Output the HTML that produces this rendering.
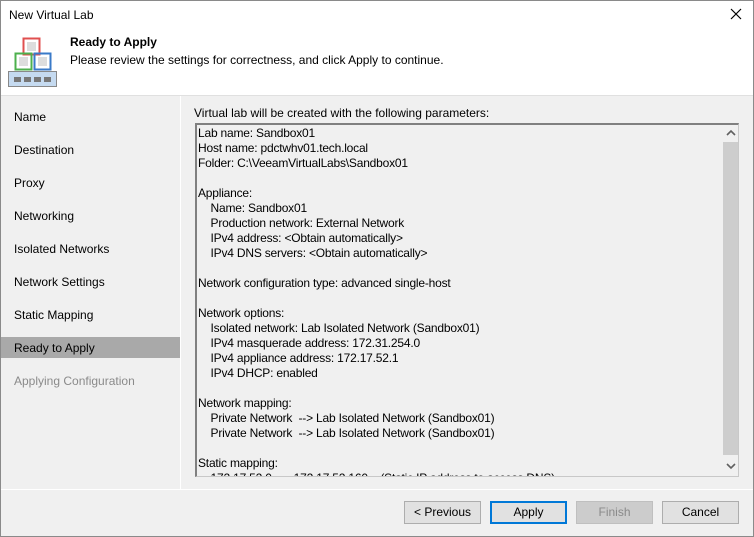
<!DOCTYPE html><html><head><style>
body{margin:0;width:754px;height:537px;overflow:hidden;font-family:"Liberation Sans",sans-serif;font-size:12px;color:#000;position:relative;background:#f0f0f0}
.abs{position:absolute}
.btn{position:absolute;top:501px;width:75px;height:21px;border:1px solid #adadad;background:#e1e1e1;text-align:center;line-height:21px;font-size:12px}
.nav{position:absolute;left:14px;font-size:12px}
pre{margin:0;font-family:"Liberation Sans",sans-serif;font-size:12px;line-height:15px;letter-spacing:-0.2px}
</style></head><body>
<div class="abs" style="left:0;top:0;width:752px;height:535px;border:1px solid #8a8a8a"></div>
<div class="abs" style="left:1px;top:1px;width:752px;height:94px;background:#fff"></div>
<div class="abs" style="left:9px;top:8px">New Virtual Lab</div>
<svg class="abs" style="left:730px;top:8px" width="12" height="12"><path d="M1 1L11 11M11 1L1 11" stroke="#000" stroke-width="1.2"/></svg>
<svg class="abs" style="left:7px;top:37px" width="52" height="52">
<rect x="16.5" y="1.5" width="16" height="16" fill="none" stroke="#e05050" stroke-width="2"/><rect x="20" y="5" width="9" height="9" fill="#ddd"/>
<rect x="8.5" y="16.5" width="16" height="16" fill="none" stroke="#4db04d" stroke-width="2"/><rect x="12" y="20" width="9" height="9" fill="#ddd"/>
<rect x="27.5" y="16.5" width="16" height="16" fill="none" stroke="#3a7ac8" stroke-width="2"/><rect x="31" y="20" width="9" height="9" fill="#ddd"/>
<rect x="1.5" y="34.5" width="48" height="15" fill="#c5daf0" stroke="#888"/>
<g fill="#777"><rect x="7" y="40" width="7" height="5"/><rect x="17" y="40" width="7" height="5"/><rect x="27" y="40" width="7" height="5"/><rect x="37" y="40" width="7" height="5"/></g>
</svg>
<div class="abs" style="left:70px;top:35px;font-weight:bold">Ready to Apply</div>
<div class="abs" style="left:70px;top:53px">Please review the settings for correctness, and click Apply to continue.</div>
<div class="abs" style="left:1px;top:95px;width:752px;height:1px;background:#e0e0e0"></div>
<div class="abs" style="left:180px;top:96px;width:1px;height:393px;background:#fff"></div>
<div class="nav" style="top:110px">Name</div>
<div class="nav" style="top:143px">Destination</div>
<div class="nav" style="top:176px">Proxy</div>
<div class="nav" style="top:209px">Networking</div>
<div class="nav" style="top:242px">Isolated Networks</div>
<div class="nav" style="top:275px">Network Settings</div>
<div class="nav" style="top:308px">Static Mapping</div>
<div class="abs" style="left:1px;top:337px;width:179px;height:21px;background:#a9a9a9"></div>
<div class="nav" style="top:341px">Ready to Apply</div>
<div class="nav" style="top:374px;color:#8a8a8a">Applying Configuration</div>
<div class="abs" style="left:194px;top:106px">Virtual lab will be created with the following parameters:</div>
<div class="abs" style="left:195px;top:123px;width:544px;height:354px;border:1px solid #c8c8c8;border-top:2px solid #808080;border-left:2px solid #808080;overflow:hidden;box-sizing:border-box">
<pre style="position:absolute;left:1px;top:1px">Lab name: Sandbox01
Host name: pdctwhv01.tech.local
Folder: C:\VeeamVirtualLabs\Sandbox01

Appliance:
    Name: Sandbox01
    Production network: External Network
    IPv4 address: &lt;Obtain automatically&gt;
    IPv4 DNS servers: &lt;Obtain automatically&gt;

Network configuration type: advanced single-host

Network options:
    Isolated network: Lab Isolated Network (Sandbox01)
    IPv4 masquerade address: 172.31.254.0
    IPv4 appliance address: 172.17.52.1
    IPv4 DHCP: enabled

Network mapping:
    Private Network  --&gt; Lab Isolated Network (Sandbox01)
    Private Network  --&gt; Lab Isolated Network (Sandbox01)

Static mapping:
    172.17.52.0       172.17.52.160    (Static IP address to access DNS)</pre>
<div class="abs" style="left:525px;top:0;width:17px;height:352px;background:#f0f0f0"></div>
<div class="abs" style="left:526px;top:17px;width:15px;height:313px;background:#cdcdcd"></div>
<svg class="abs" style="left:529px;top:4px" width="10" height="8"><path d="M1 6L5 2L9 6" fill="none" stroke="#606060" stroke-width="1.6"/></svg>
<svg class="abs" style="left:529px;top:337px" width="10" height="8"><path d="M1 2L5 6L9 2" fill="none" stroke="#606060" stroke-width="1.6"/></svg>
</div>
<div class="abs" style="left:1px;top:489px;width:752px;height:1px;background:#fff"></div>
<div class="btn" style="left:404px">&lt; Previous</div>
<div class="btn" style="left:490px;border:2px solid #0078d7;width:73px;height:19px;line-height:19px">Apply</div>
<div class="btn" style="left:576px;background:#ccc;border-color:#bfbfbf;color:#8a8a8a">Finish</div>
<div class="btn" style="left:662px">Cancel</div>
</body></html>
